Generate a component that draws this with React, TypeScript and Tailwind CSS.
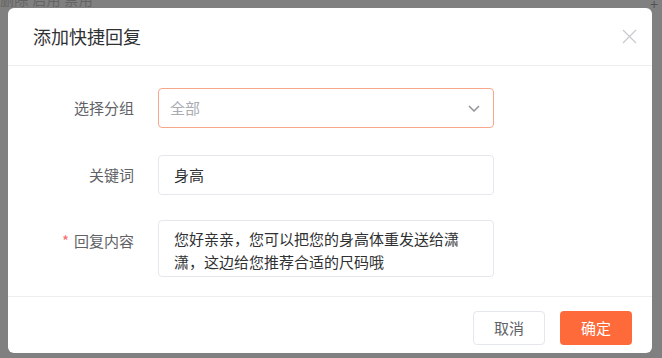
import React from 'react'

const FONT = { fontFamily: '"Noto Sans CJK SC", "Noto Sans", sans-serif' }

function CloseIcon() {
  return (
    <svg width="15" height="15" viewBox="0 0 15 15" fill="none">
      <path d="M1 1L14 14M14 1L1 14" stroke="#c8c9cc" strokeWidth="1.2" />
    </svg>
  )
}

function Chevron() {
  return (
    <svg width="12" height="7" viewBox="0 0 12 7" fill="none">
      <path d="M1 1L6 6L11 1" stroke="#909399" strokeWidth="1.5" />
    </svg>
  )
}

interface FieldRowProps {
  label: string
  required?: boolean
  top?: boolean
  children: React.ReactNode
}

function FieldRow({ label, required, top, children }: FieldRowProps) {
  return (
    <div className={top ? 'flex items-start' : 'flex items-center'}>
      <div
        className={
          'w-[126px] shrink-0 flex justify-end text-[15px] text-[#606266] ' +
          (top ? 'pt-[9px] leading-[23px]' : '')
        }
      >
        {required && <span className="text-[#f56c6c] mr-[5px]">*</span>}
        {label}
      </div>
      <div className="ml-[24px] w-[336px]">{children}</div>
    </div>
  )
}

export default function App() {
  return (
    <div className="w-[662px] h-[358px] bg-[#808080] overflow-hidden" style={FONT}>
      {/* page behind the overlay */}
      <div className="h-[8px] overflow-hidden flex justify-between">
        <div className="-mt-[11px] text-[14px] text-[#3a3a3a] opacity-40 tracking-wide">删除 启用 禁用</div>
        <div className="-mt-[6px] mr-[4px] text-[14px] text-[#333] opacity-60">+</div>
      </div>

      <div className="ml-[8px] w-[644px] h-[345px] bg-white rounded-[6px] flex flex-col">
        <div className="h-[58px] shrink-0 flex items-center justify-between pl-[25px] pr-[15px] border-b border-[#eeeeee]">
          <span className="text-[18px] text-[#303133]">添加快捷回复</span>
          <CloseIcon />
        </div>

        <div className="pt-[22px] pb-[19px] flex flex-col">
          <FieldRow label="选择分组">
            <div className="h-[40px] border border-[#f7a88b] rounded-[4px] flex items-center justify-between pl-[11px] pr-[13px]">
              <span className="text-[15px] text-[#a8abb2]">全部</span>
              <Chevron />
            </div>
          </FieldRow>
          <div className="h-[27px]" />
          <FieldRow label="关键词">
            <div className="h-[40px] border border-[#e4e7ed] rounded-[4px] flex items-center px-[15px]">
              <span className="text-[15px] text-[#303133]">身高</span>
            </div>
          </FieldRow>
          <div className="h-[25px]" />
          <FieldRow label="回复内容" required top>
            <div className="h-[57px] border border-[#e4e7ed] rounded-[4px] pt-[6px] pl-[15px] pr-[30px] text-[15px] leading-[23px] text-[#303133]">
              您好亲亲，您可以把您的身高体重发送给潇潇，这边给您推荐合适的尺码哦
            </div>
          </FieldRow>
        </div>

        <div className="border-t border-[#eeeeee] flex justify-end gap-[15px] pt-[14px] pr-[20px]">
          <button className="w-[72px] h-[34px] border border-[#e4e7ed] rounded-[4px] text-[15px] text-[#606266] bg-white">
            取消
          </button>
          <button className="w-[72px] h-[34px] rounded-[4px] text-[15px] text-white bg-[#ff6a3b]">
            确定
          </button>
        </div>
      </div>
    </div>
  )
}
